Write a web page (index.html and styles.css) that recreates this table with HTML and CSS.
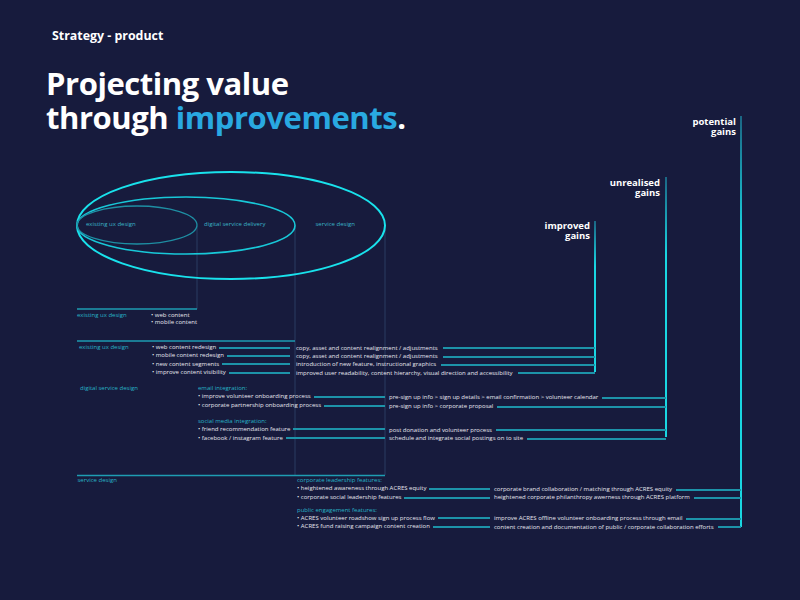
FILE: index.html
```html
<!DOCTYPE html>
<html lang="en">
<head>
<meta charset="utf-8">
<title>Strategy - product</title>
<link rel="stylesheet" href="styles.css">
</head>
<body>
<div class="page">
  <header class="head">
    <div class="kicker">Strategy - product</div>
    <h1 class="title">Projecting value<br>through <span class="hl">improvements</span>.</h1>
  </header>

  <svg class="wires" width="800" height="600" viewBox="0 0 800 600" aria-hidden="true">
    <defs>
      <linearGradient id="gain" x1="0" y1="0" x2="0" y2="1">
        <stop offset="0" stop-color="#1b6684"/>
        <stop offset="0.3" stop-color="#19d6e2"/>
        <stop offset="1" stop-color="#19d6e2"/>
      </linearGradient>
    </defs>
    <g class="thin">
      <line x1="197" y1="226" x2="197" y2="309"/>
      <line x1="295" y1="226" x2="295" y2="475"/>
      <line x1="385" y1="226" x2="385" y2="475"/>
    </g>
    <g class="sect">
      <line x1="77" y1="309" x2="197" y2="309"/>
      <line x1="77" y1="341" x2="295" y2="341"/>
      <line x1="77" y1="475.5" x2="385" y2="475.5"/>
    </g>
    <ellipse class="e-out" cx="231" cy="225.5" rx="154" ry="53.5"/>
    <ellipse class="e-mid" cx="186" cy="225.5" rx="109" ry="28.5"/>
    <ellipse class="e-in" cx="137" cy="225" rx="60" ry="19"/>
    <rect x="594" y="221" width="2" height="151" fill="url(#gain)"/>
    <rect x="665" y="177" width="2" height="260" fill="url(#gain)"/>
    <rect x="740" y="116" width="2" height="411" fill="url(#gain)"/>
  </svg>

  <span class="node elab e1">existing ux design</span>
  <span class="node elab e2">digital service delivery</span>
  <span class="node elab e3">service design</span>

  <div class="node gain g1">potential<br>gains</div>
  <div class="node gain g2">unrealised<br>gains</div>
  <div class="node gain g3">improved<br>gains</div>

  <!-- row 1 -->
  <span class="node lbl l1">existing ux design</span>
  <ul class="node plain b1">
    <li>• web content</li>
    <li>• mobile content</li>
  </ul>

  <!-- row 2 -->
  <span class="node lbl l2">existing ux design</span>
  <div class="node flow f2">
    <div class="item"><div class="cell"><span>• web content redesign</span><i class="wire"></i></div><div class="cell r"><span>copy, asset and content realignment / adjustments</span><i class="wire"></i></div></div>
    <div class="item"><div class="cell"><span>• mobile content redesign</span><i class="wire"></i></div><div class="cell r"><span>copy, asset and content realignment / adjustments</span><i class="wire"></i></div></div>
    <div class="item"><div class="cell"><span>• new content segments</span><i class="wire"></i></div><div class="cell r"><span>introduction of new feature, instructional graphics</span><i class="wire"></i></div></div>
    <div class="item"><div class="cell"><span>• improve content visibility</span><i class="wire"></i></div><div class="cell r"><span>improved user readability, content hierarchy, visual direction and accessibility</span><i class="wire"></i></div></div>
  </div>

  <!-- row 3 -->
  <span class="node lbl l3">digital service design</span>
  <div class="node flow f3">
    <div class="grp">email integration:</div>
    <div class="item"><div class="cell"><span>• improve volunteer onboarding process</span><i class="wire"></i></div><div class="cell r"><span>pre-sign up info &gt; sign up details &gt; email confirmation &gt; volunteer calendar</span><i class="wire"></i></div></div>
    <div class="item"><div class="cell"><span>• corporate partnership onboarding process</span><i class="wire"></i></div><div class="cell r"><span>pre-sign up info &gt; corporate proposal</span><i class="wire"></i></div></div>
    <div class="grp next">social media integration:</div>
    <div class="item"><div class="cell"><span>• friend recommendation feature</span><i class="wire"></i></div><div class="cell r"><span>post donation and volunteer process</span><i class="wire"></i></div></div>
    <div class="item"><div class="cell"><span>• facebook / instagram feature</span><i class="wire"></i></div><div class="cell r"><span>schedule and integrate social postings on to site</span><i class="wire"></i></div></div>
  </div>

  <!-- row 4 -->
  <span class="node lbl l4">service design</span>
  <div class="node flow f4">
    <div class="grp">corporate leadership features:</div>
    <div class="item"><div class="cell"><span>• heightened awareness through ACRES equity</span><i class="wire"></i></div><div class="cell r"><span>corporate brand collaboration / matching through ACRES equity</span><i class="wire"></i></div></div>
    <div class="item"><div class="cell"><span>• corporate social leadership features</span><i class="wire"></i></div><div class="cell r"><span>heightened corporate philanthropy awerness through ACRES platform</span><i class="wire"></i></div></div>
    <div class="grp next">public engagement features:</div>
    <div class="item"><div class="cell"><span>• ACRES volunteer roadshow sign up process flow</span><i class="wire"></i></div><div class="cell r"><span>improve ACRES offline volunteer onboarding process through email</span><i class="wire"></i></div></div>
    <div class="item"><div class="cell"><span>• ACRES fund raising campaign content creation</span><i class="wire"></i></div><div class="cell r"><span>content creation and documentation of public / corporate collaboration efforts</span><i class="wire"></i></div></div>
  </div>
</div>
</body>
</html>
```

FILE: styles.css
```css
* { box-sizing: border-box; }
html, body { margin: 0; padding: 0; background: #171b3d; }
.page {
  position: relative;
  width: 800px;
  height: 600px;
  overflow: hidden;
  background: #171b3d;
  font-family: "Open Sans", "Noto Sans", sans-serif;
  color: #e6e6ee;
}

/* header */
.head { padding: 28px 0 0 52px; }
.kicker {
  font-size: 12.4px;
  line-height: 16px;
  font-weight: 700;
  color: #ffffff;
}
.title {
  margin: 22px 0 0 -6px;
  font-size: 31px;
  line-height: 34px;
  font-weight: 700;
  color: #ffffff;
  letter-spacing: -0.45px;
}
.hl { color: #29a9e1; }

/* geometric overlay */
.wires { position: absolute; left: 0; top: 0; pointer-events: none; }
.thin line { stroke: #2a3d63; stroke-width: 1; }
.sect line { stroke: #1e9db2; stroke-width: 1.5; }
.e-out { fill: none; stroke: #19e2ec; stroke-width: 2; }
.e-mid { fill: none; stroke: #18c8d8; stroke-width: 1.6; }
.e-in  { fill: none; stroke: #1e8ea3; stroke-width: 1.3; }

/* diagram nodes */
.node { position: absolute; font-size: 6px; line-height: 7.35px; white-space: nowrap; }
.elab { color: #3ab3c6; top: 221.3px; }
.e1 { left: 86px; }
.e2 { left: 204px; }
.e3 { left: 315.5px; }

.gain {
  font-size: 9.5px;
  line-height: 10.3px;
  font-weight: 700;
  color: #ffffff;
  text-align: right;
}
.g1 { right: 64px; top: 117px; }
.g2 { right: 140px; top: 177.5px; }
.g3 { right: 210px; top: 221px; }

.lbl { color: #27b3c6; }
.l1 { left: 77px; top: 311.6px; }
.l2 { left: 79px; top: 343.6px; }
.l3 { left: 80px; top: 385.3px; }
.l4 { left: 77.5px; top: 477.3px; }

.plain { margin: 0; padding: 0; list-style: none; line-height: 7.6px; }
.b1 { left: 151px; top: 311.6px; }

.flow .item { display: grid; grid-template-columns: var(--lw) var(--rw); column-gap: var(--gap); }
.cell { display: flex; align-items: center; min-width: 0; }
.cell span { white-space: nowrap; }
.wire { flex: 1; height: 2px; background: #1d93a9; margin-left: 3px; }
.cell.r .wire { margin-left: 5px; }
.grp { color: #27b3c6; }

.f2 { left: 152px; top: 343.6px; --lw: 138px; --rw: 299px; --gap: 6px; }
.f2 .cell.r { padding-top: 1px; }

.f3 { left: 198px; top: 385.3px; --lw: 187px; --rw: 277px; --gap: 4px; }
.f3 .grp.next { margin-top: 7.35px; }
.f3 .cell.r { padding-top: 1.5px; }
.f3 .cell.r .wire { margin-left: 4px; }

.f4 { left: 297px; top: 477.3px; line-height: 7.5px; --lw: 193px; --rw: 247px; --gap: 4px; }
.f4 .grp.next { margin-top: 4.8px; }
.f4 .cell.r { padding-top: 1px; }
.f4 .cell.r .wire { margin-left: 4px; }
```
